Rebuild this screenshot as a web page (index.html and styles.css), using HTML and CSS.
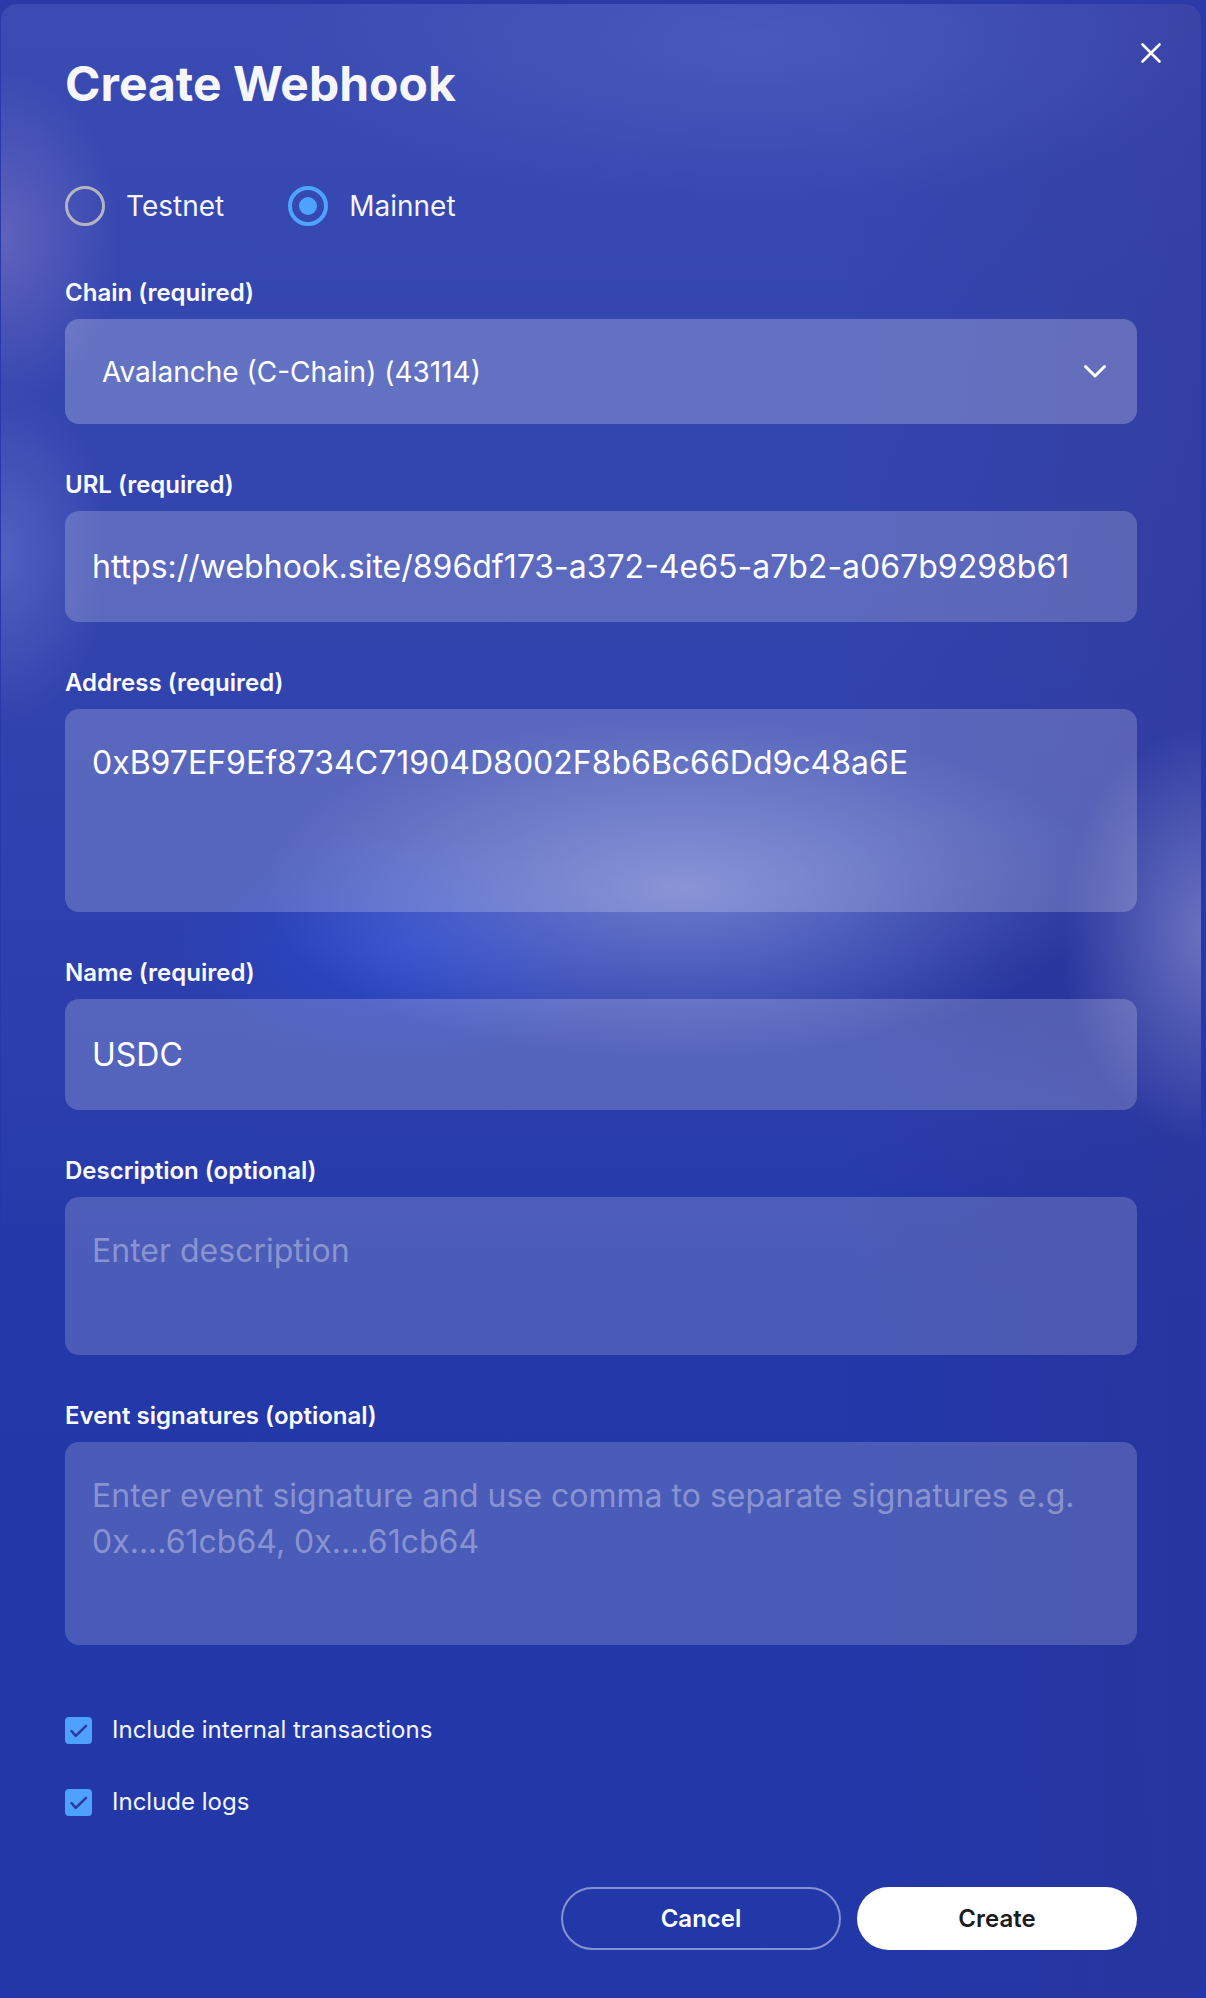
FILE: index.html
```html
<!DOCTYPE html>
<html lang="en">
<head>
<meta charset="utf-8">
<title>Create Webhook</title>
<link rel="stylesheet" href="styles.css">
</head>
<body>
<div class="modal">
  <button class="close" aria-label="Close">
    <svg width="24" height="24" viewBox="0 0 24 24"><path d="M3.5 3.5 L20.5 20.5 M20.5 3.5 L3.5 20.5" stroke="#fff" stroke-width="2.6" stroke-linecap="round" fill="none"/></svg>
  </button>
  <h1 class="title">Create Webhook</h1>

  <div class="radios">
    <label class="radio"><span class="dot"></span><span>Testnet</span></label>
    <label class="radio radio-on"><span class="dot"></span><span>Mainnet</span></label>
  </div>

  <div class="fields">
    <div class="field">
      <div class="label">Chain (required)</div>
      <div class="box select">
        <span>Avalanche (C-Chain) (43114)</span>
        <svg width="24" height="16" viewBox="0 0 24 16"><path d="M2.5 2.5 L12 12 L21.5 2.5" stroke="#fff" stroke-width="3" stroke-linecap="round" stroke-linejoin="round" fill="none"/></svg>
      </div>
    </div>
    <div class="field">
      <div class="label">URL (required)</div>
      <div class="box input">https://webhook.site/896df173-a372-4e65-a7b2-a067b9298b61</div>
    </div>
    <div class="field">
      <div class="label">Address (required)</div>
      <div class="box area area-lg">0xB97EF9Ef8734C71904D8002F8b6Bc66Dd9c48a6E</div>
    </div>
    <div class="field">
      <div class="label">Name (required)</div>
      <div class="box input">USDC</div>
    </div>
    <div class="field">
      <div class="label">Description (optional)</div>
      <div class="box area area-sm placeholder">Enter description</div>
    </div>
    <div class="field">
      <div class="label">Event signatures (optional)</div>
      <div class="box area area-lg placeholder">Enter event signature and use comma to separate signatures e.g. 0x....61cb64, 0x....61cb64</div>
    </div>
  </div>

  <div class="checks">
    <label class="check"><span class="cbox"><svg width="27" height="27" viewBox="0 0 27 27"><path d="M6.5 14 L10.8 18.8 L21 8.8" stroke="#2b3a9f" stroke-width="2.5" stroke-linecap="round" stroke-linejoin="round" fill="none"/></svg></span><span>Include internal transactions</span></label>
    <label class="check"><span class="cbox"><svg width="27" height="27" viewBox="0 0 27 27"><path d="M6.5 14 L10.8 18.8 L21 8.8" stroke="#2b3a9f" stroke-width="2.5" stroke-linecap="round" stroke-linejoin="round" fill="none"/></svg></span><span>Include logs</span></label>
  </div>

  <div class="actions">
    <button class="btn btn-ghost">Cancel</button>
    <button class="btn btn-solid">Create</button>
  </div>
</div>
</body>
</html>
```

FILE: styles.css
```css
* { box-sizing: border-box; }

html, body {
  margin: 0;
  padding: 0;
}

body {
  width: 1206px;
  height: 1998px;
  overflow: hidden;
  background: linear-gradient(180deg, #2a3aa9 0%, #2336ab 100%);
  font-family: "Inter", "Noto Sans", sans-serif;
  color: #fff;
}

.modal {
  position: relative;
  margin: 4px 0 0 1px;
  width: 1200px;
  height: 1993px;
  border-radius: 16px;
  padding: 52px 64px 0 64px;
  overflow: hidden;
  background:
    radial-gradient(ellipse 120px 170px at 0px 235px, rgba(155, 135, 205, 0.42), rgba(155, 135, 205, 0) 100%),
    radial-gradient(ellipse 110px 170px at 0px 550px, rgba(140, 150, 225, 0.35), rgba(140, 150, 225, 0) 100%),
    radial-gradient(ellipse 420px 170px at 680px 885px, rgba(170, 180, 235, 0.5), rgba(170, 180, 235, 0) 100%),
    radial-gradient(ellipse 150px 210px at 1210px 930px, rgba(170, 175, 225, 0.5), rgba(170, 175, 225, 0) 100%),
    radial-gradient(ellipse 230px 120px at 400px 945px, rgba(40, 80, 230, 0.5), rgba(40, 80, 230, 0) 100%),
    radial-gradient(ellipse 260px 140px at 1010px 960px, rgba(30, 40, 140, 0.35), rgba(30, 40, 140, 0) 100%),
    radial-gradient(ellipse 500px 160px at 750px 40px, rgba(95, 110, 200, 0.4), rgba(95, 110, 200, 0) 100%),
    linear-gradient(90deg, rgba(60, 50, 140, 0) 70%, rgba(50, 45, 130, 0.28) 100%),
    linear-gradient(180deg, #3a4bb3 0%, #3446b0 16%, #3244ae 30%, #2d40ad 45%, #2a3dab 55%, #2338a9 65%, #2238a9 100%);
}

.close {
  position: absolute;
  top: 37px;
  right: 38px;
  width: 24px;
  height: 24px;
  padding: 0;
  border: 0;
  background: none;
  cursor: pointer;
}

.close svg { display: block; }

.title {
  margin: 0;
  font-size: 48px;
  line-height: 56px;
  font-weight: 700;
  color: #f7f7fb;
}

.radios {
  display: flex;
  gap: 64px;
  margin-top: 74px;
  height: 40px;
}

.radio {
  display: flex;
  align-items: center;
  gap: 21px;
  font-size: 28px;
  line-height: 40px;
  color: #f4f5fb;
}

.dot {
  width: 40px;
  height: 40px;
  border-radius: 50%;
  border: 3.5px solid #b4b4c0;
  display: flex;
  align-items: center;
  justify-content: center;
}

.radio-on .dot {
  border: 4px solid #4ea3ff;
}

.radio-on .dot::after {
  content: "";
  width: 18px;
  height: 18px;
  border-radius: 50%;
  background: #4ea3ff;
}

.fields {
  display: flex;
  flex-direction: column;
  gap: 43px;
  margin-top: 49px;
}

.label {
  font-size: 24px;
  line-height: 36px;
  font-weight: 600;
  margin-bottom: 8px;
  color: #fbfbff;
}

.box {
  border-radius: 14px;
  background: rgba(255, 255, 255, 0.2);
  font-size: 32px;
  color: #fff;
}

.select {
  height: 105px;
  display: flex;
  align-items: center;
  justify-content: space-between;
  padding: 0 30px 0 37px;
  font-size: 28px;
  background: rgba(255, 255, 255, 0.24);
}

.select svg { display: block; }

.input {
  height: 111px;
  display: flex;
  align-items: center;
  padding: 0 27px;
  white-space: nowrap;
}

.area {
  padding: 31px 27px;
  line-height: 46px;
}

.area-lg { height: 203px; }
.area-sm { height: 158px; }

.placeholder {
  color: rgba(255, 255, 255, 0.36);
  background: rgba(255, 255, 255, 0.18);
}

.checks {
  display: flex;
  flex-direction: column;
  gap: 36px;
  margin-top: 67px;
}

.check {
  display: flex;
  align-items: center;
  gap: 20px;
  height: 36px;
  font-size: 24px;
  line-height: 36px;
  color: #f4f5fb;
}

.cbox {
  width: 27px;
  height: 27px;
  border-radius: 4px;
  background: #4ea1ff;
  display: block;
}

.cbox svg { display: block; }

.actions {
  display: flex;
  justify-content: flex-end;
  gap: 16px;
  margin-top: 67px;
}

.btn {
  width: 280px;
  height: 63px;
  border-radius: 32px;
  font-family: "Inter", "Noto Sans", sans-serif;
  font-size: 24px;
  font-weight: 600;
  cursor: pointer;
}

.btn-ghost {
  background: transparent;
  color: #fff;
  border: 2px solid rgba(255, 255, 255, 0.45);
}

.btn-solid {
  background: #fff;
  color: #1b1b1f;
  border: 0;
}
```
